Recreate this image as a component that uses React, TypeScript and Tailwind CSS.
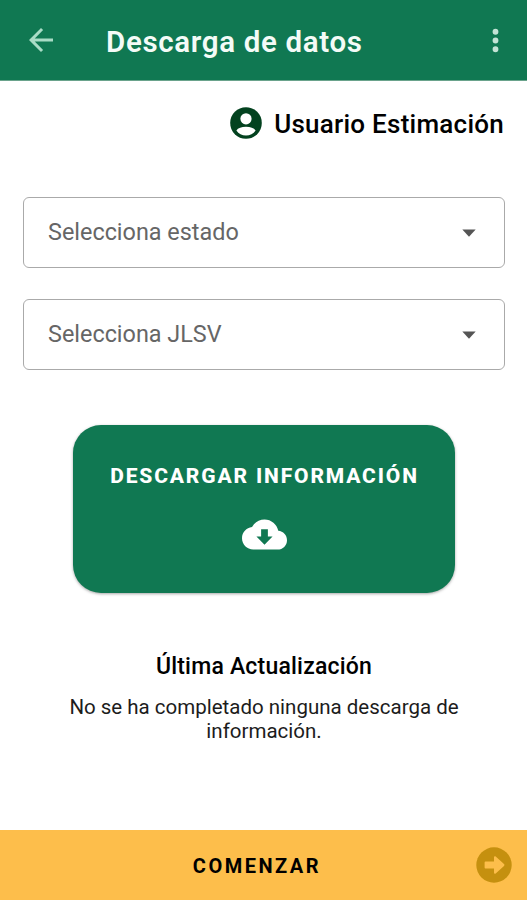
import { useState } from "react";

export default function App() {
  const [fields] = useState(["Selecciona estado", "Selecciona JLSV"]);

  return (
    <div className="flex h-[900px] w-[527px] flex-col overflow-hidden bg-white font-['Roboto',sans-serif] text-[#111]">
      {/* App bar */}
      <header className="flex h-[81px] shrink-0 items-center border-b border-[#6aa38c] bg-[#107852] pl-[23px] pr-[14px]">
        <svg className="size-9" viewBox="0 0 24 24" fill="#a9dcc6">
          <path d="M20 11H7.83l5.59-5.59L12 4l-8 8 8 8 1.41-1.41L7.83 13H20v-2z" />
        </svg>
        <h1 className="ml-[47px] flex-1 whitespace-nowrap pt-[4px] text-[29.5px] font-semibold tracking-[0.66px] text-[#f4fbf7]">Descarga de datos</h1>
        <svg className="size-[35px]" viewBox="0 0 24 24" fill="#c3e3d5">
          <path d="M12 8a2 2 0 1 0 0-4 2 2 0 0 0 0 4zm0 2a2 2 0 1 0 0 4 2 2 0 0 0 0-4zm0 6a2 2 0 1 0 0 4 2 2 0 0 0 0-4z" />
        </svg>
      </header>

      {/* User */}
      <div className="mt-[22px] flex h-[40px] items-center justify-end pr-[23px]">
        <svg className="mr-[12px] size-[32px]" viewBox="0 0 32 32" fill="#fff">
          <circle cx="16" cy="16" r="15.8" fill="#03421f" />
          <circle cx="16" cy="11.8" r="5.6" />
          <path d="M6.4 23.4c1.6-2.2 5.2-3.6 9.6-3.6s8 1.4 9.6 3.6c-2.2 3.2-5.6 5.2-9.6 5.2s-7.4-2-9.6-5.2z" />
        </svg>
        <span className="pt-[3px] text-[26px] font-medium tracking-[0.25px] text-black">Usuario Estimación</span>
      </div>

      {/* Selects */}
      <div className="mt-[54px] flex flex-col gap-[31px] pl-[23px] pr-[22px]">
        {fields.map((label) => (
          <button key={label} className="flex h-[71px] items-center justify-between rounded-[6px] border-[1.5px] border-[#aaa] pl-[24px] pr-[19px] text-[23.4px] text-[#666]">
            <span className="pt-px">{label}</span>
            <svg className="size-8" viewBox="0 0 24 24" fill="#555">
              <path d="M7 9.4l5 5.4 5-5.4z" />
            </svg>
          </button>
        ))}
      </div>

      {/* Download */}
      <button className="mx-auto mt-[55px] flex h-[168px] w-[382px] shrink-0 flex-col items-center rounded-[28px] bg-[#107852] pt-[36px] text-white shadow-[0_1px_3px_rgba(0,0,0,0.35)]">
        <span className="whitespace-nowrap pl-[2px] text-[21px] font-extrabold leading-[30px] tracking-[1.85px]">DESCARGAR INFORMACIÓN</span>
        <svg className="ml-px mt-[21px] size-[45px]" viewBox="0 0 24 24" fill="currentColor">
          <path d="M19.35 10.04C18.67 6.59 15.64 4 12 4 9.11 4 6.6 5.64 5.35 8.04 2.34 8.36 0 10.91 0 14c0 3.31 2.69 6 6 6h13c2.76 0 5-2.24 5-5 0-2.64-2.05-4.78-4.65-4.96zM16.3 13l-4.3 4.5-4.3-4.5h2.5V9.2h3.6V13z" />
        </svg>
      </button>

      {/* Last update */}
      <section className="mt-[58px] pl-px text-center text-black">
        <h2 className="text-[23px] font-medium leading-[32px] tracking-[0.2px]">Última Actualización</h2>
        <p className="mt-[12px] text-[20.5px] leading-[24px] text-[#1c1c1c]">
          No se ha completado ninguna descarga de
          <br />
          información.
        </p>
      </section>

      <footer className="mt-auto flex h-[70px] shrink-0 items-center bg-[#fdbe4b] pr-[15px]">
        <span className="flex-1 pl-[38px] pt-[2px] text-center text-[20px] font-bold tracking-[2.5px] text-black">COMENZAR</span>
        <svg className="size-[36px]" viewBox="0 0 36 36" fill="#c5900f">
          <circle cx="18" cy="18" r="17.7" />
          <path d="M9.5 14.6H18V10.2c0-1 1-1.2 1.7-.6l8.3 7.5c.6.6.6 1.2 0 1.8l-8.3 7.5c-.7.6-1.7.4-1.7-.6V21.4H9.5c-.6 0-.9-.3-.9-.9v-5c0-.6.3-.9.9-.9z" fill="#fdbe4b" />
        </svg>
      </footer>
    </div>
  );
}
